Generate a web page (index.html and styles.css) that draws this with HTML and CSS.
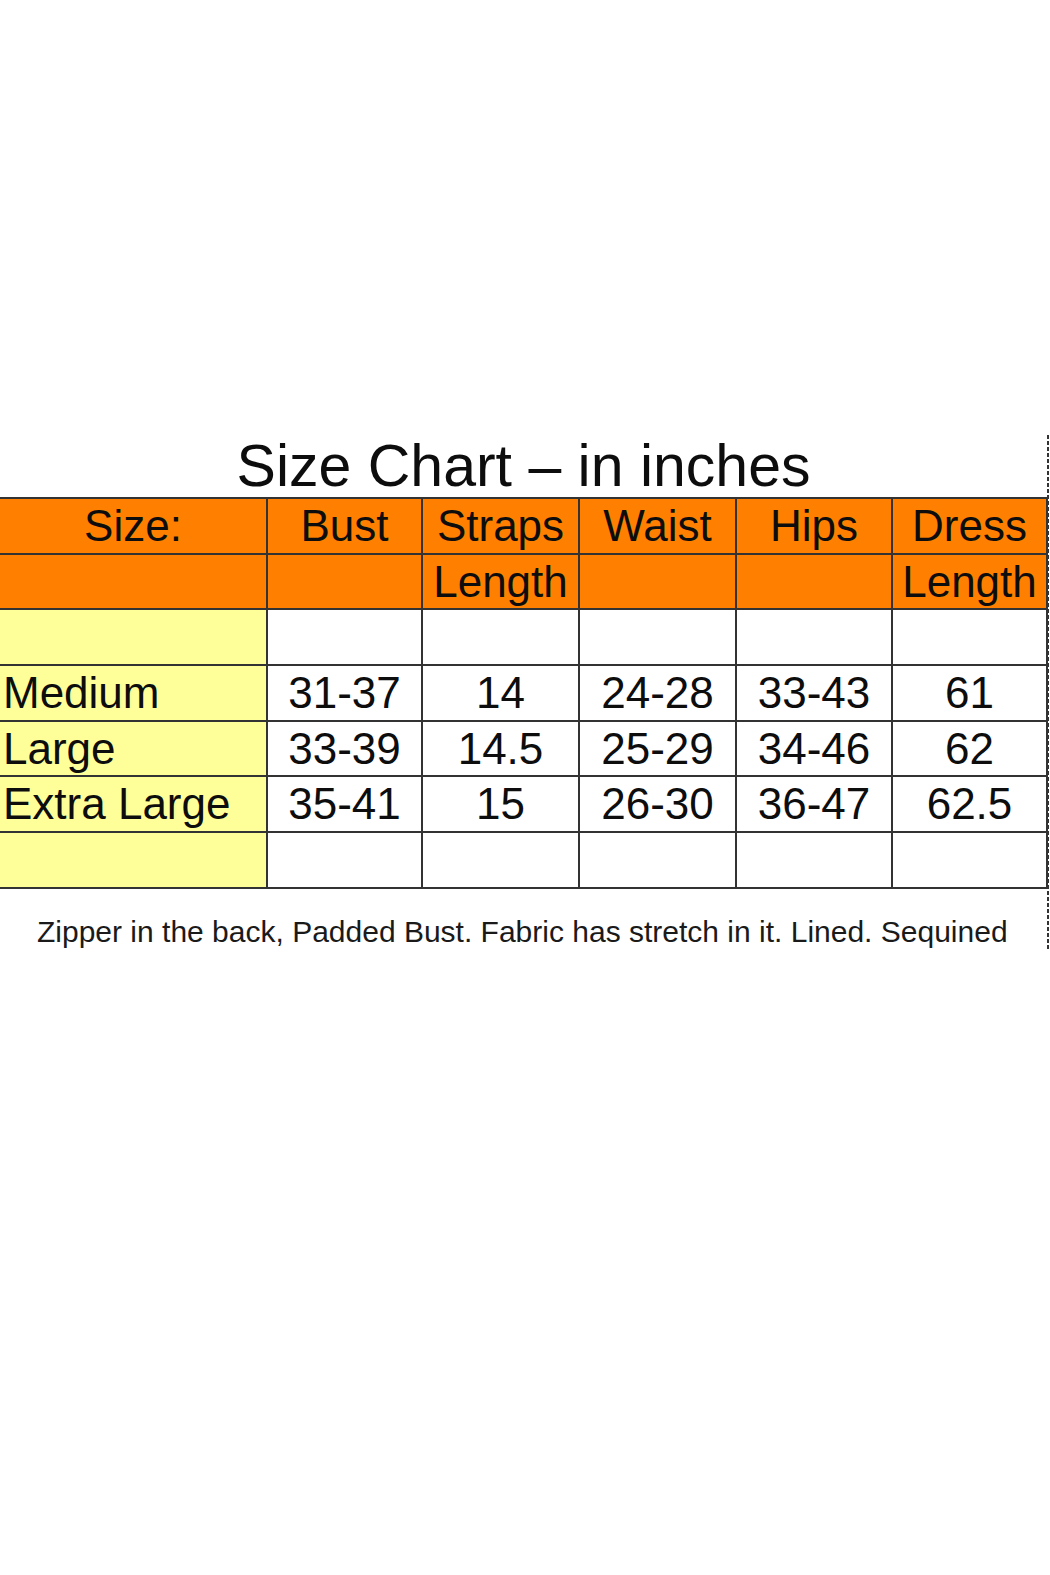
FILE: index.html
```html
<!DOCTYPE html>
<html lang="en">
<head>
<meta charset="utf-8">
<title>Size Chart</title>
<link rel="stylesheet" href="styles.css">
</head>
<body>
<div class="page">
  <div class="sheet">
    <h1 class="title">Size Chart – in inches</h1>
    <table class="chart">
      <colgroup>
        <col class="c-size">
        <col class="c-num">
        <col class="c-num2">
        <col class="c-num2">
        <col class="c-num3">
        <col class="c-num">
      </colgroup>
      <tr class="head">
        <td>Size:</td><td>Bust</td><td>Straps</td><td>Waist</td><td>Hips</td><td>Dress</td>
      </tr>
      <tr class="head">
        <td></td><td></td><td>Length</td><td></td><td></td><td>Length</td>
      </tr>
      <tr class="blank">
        <td class="label"></td><td></td><td></td><td></td><td></td><td></td>
      </tr>
      <tr>
        <td class="label">Medium</td><td>31-37</td><td>14</td><td>24-28</td><td>33-43</td><td>61</td>
      </tr>
      <tr>
        <td class="label">Large</td><td>33-39</td><td>14.5</td><td>25-29</td><td>34-46</td><td>62</td>
      </tr>
      <tr>
        <td class="label">Extra Large</td><td>35-41</td><td>15</td><td>26-30</td><td>36-47</td><td>62.5</td>
      </tr>
      <tr class="blank">
        <td class="label"></td><td></td><td></td><td></td><td></td><td></td>
      </tr>
    </table>
    <p class="note">Zipper in the back, Padded Bust. Fabric has stretch in it. Lined. Sequined</p>
  </div>
</div>
</body>
</html>
```

FILE: styles.css
```css
html, body {
  margin: 0;
  padding: 0;
  background: #ffffff;
}

body {
  font-family: "Liberation Sans", Arial, sans-serif;
  color: #0d0d0d;
}

.page {
  padding-top: 435px;
}

.sheet {
  width: 1049px;
  padding-bottom: 2px;
  background-image: linear-gradient(#333333 4px, transparent 4px);
  background-size: 2px 6px;
  background-position: right top;
  background-repeat: repeat-y;
}

.title {
  width: 1047px;
  margin: 0;
  font-weight: normal;
  font-size: 59px;
  line-height: 62px;
  text-align: center;
  color: #0d0d0d;
}

.chart {
  width: 1047px;
  border-collapse: collapse;
  table-layout: fixed;
  font-size: 44px;
}

.c-size { width: 267px; }
.c-num { width: 155px; }
.c-num2 { width: 157px; }
.c-num3 { width: 156px; }

.chart td {
  border: 2px solid #333333;
  padding: 0 1px;
  height: 53.7px;
  line-height: 50px;
  text-align: center;
  vertical-align: middle;
  white-space: nowrap;
  overflow: visible;
  background: #ffffff;
}

.chart td:first-child {
  border-left: none;
}

.chart tr.head td {
  background: #ff8000;
}

.chart td.label {
  background: #ffff99;
  text-align: left;
  padding-left: 3px;
}

.note {
  margin: 26px 0 0 0;
  padding-left: 37px;
  font-size: 30px;
  line-height: 34px;
  color: #1a1a1a;
}
```
